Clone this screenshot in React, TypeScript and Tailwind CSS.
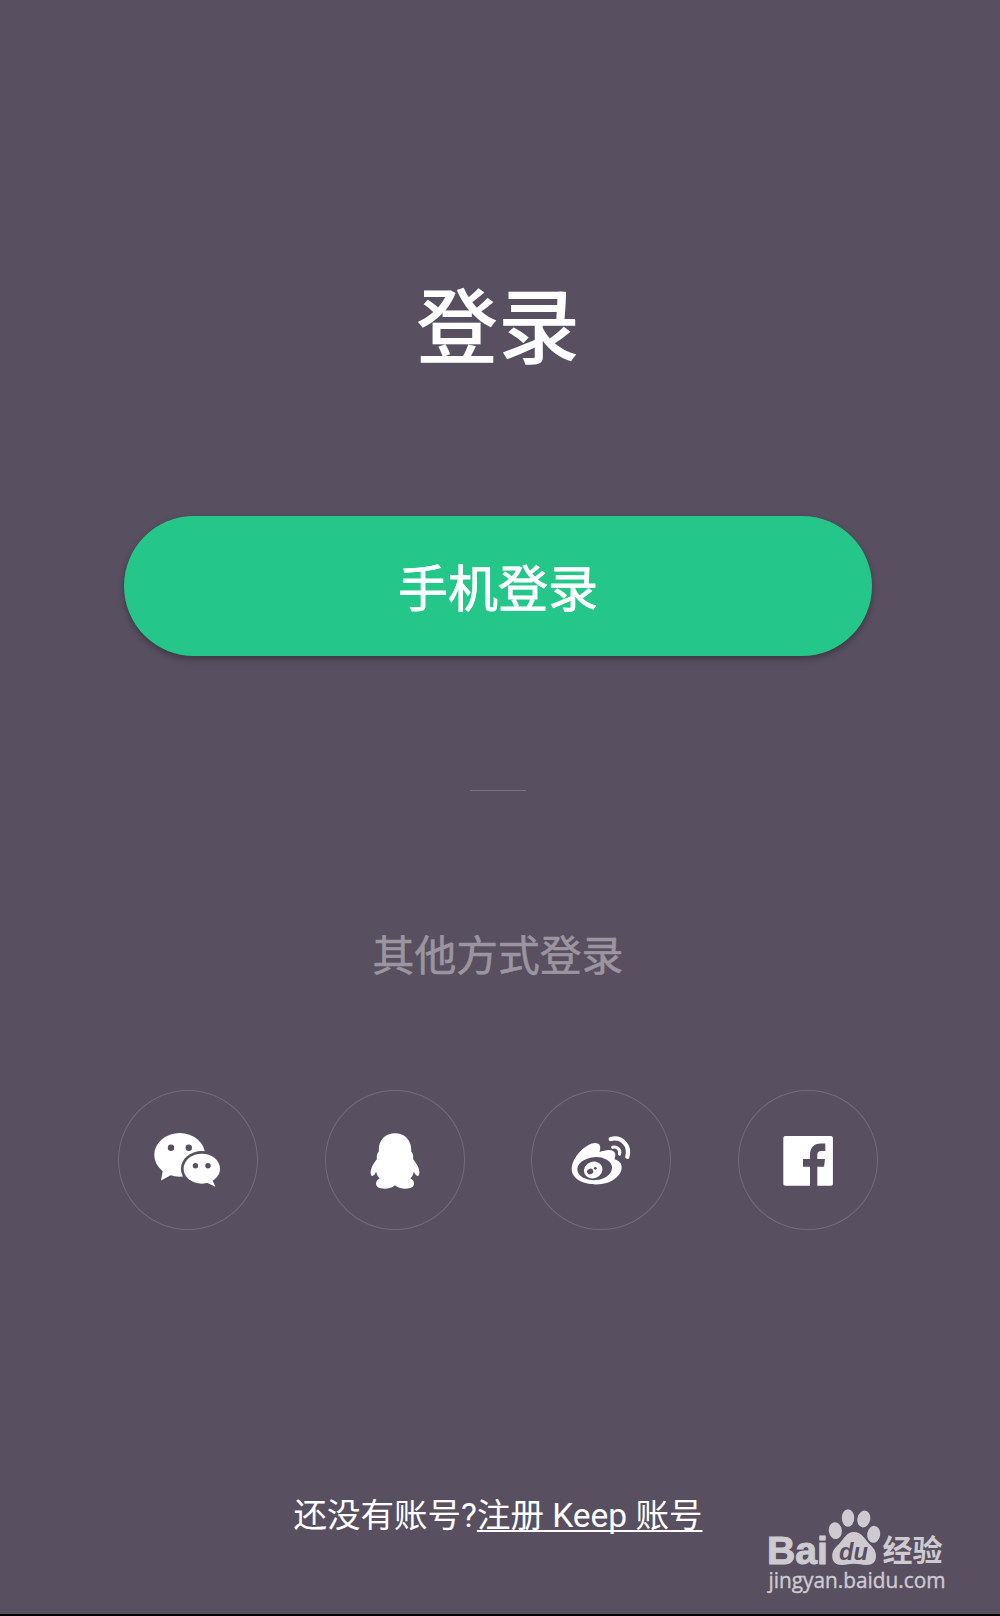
import type { ReactNode } from 'react';

const WechatIcon = () => (
  <svg viewBox="0 0 140 140" className="h-full w-full">
    <g className="fill-white">
      <ellipse cx="61.7" cy="64.9" rx="25.4" ry="21.8" />
      <path d="M45 79L43 90.4L54 84.5Z" />
    </g>
    <ellipse cx="83.8" cy="78.7" rx="20.9" ry="17.6" className="fill-[#584f60]" />
    <g className="fill-white">
      <ellipse cx="83.8" cy="78.7" rx="18.2" ry="15" />
      <path d="M88.5 92.5L97.4 96.8L94 89Z" />
    </g>
    <g className="fill-[#584f60]">
      <circle cx="53" cy="57.7" r="3.2" />
      <circle cx="70.8" cy="57.7" r="3.2" />
      <circle cx="77.4" cy="75.7" r="2.7" />
      <circle cx="90" cy="75.7" r="2.7" />
    </g>
  </svg>
);

const QQIcon = () => (
  <svg viewBox="0 0 140 140" className="h-full w-full fill-white">
    <path d="M70 43.3C60.5 43.3 53.8 50 53.8 59.5V61.5C52 63.5 51.5 66 51.9 69C48 74 45.6 78.5 45.6 82C45.6 84.6 46.2 86 47.3 86C48.7 86 50 84 51.2 81.8C51.8 84.5 52.8 86.8 54.6 88.6C52.2 89.6 51 91.4 51 93.6C51 97 54.5 98.8 59.5 98.8C64 98.8 67.5 97.6 70 95.3C72.5 97.6 76 98.8 80.5 98.8C85.5 98.8 89 97 89 93.6C89 91.4 87.8 89.6 85.4 88.6C87.2 86.8 88.2 84.5 88.8 81.8C90 84 91.3 86 92.7 86C93.8 86 94.4 84.6 94.4 82C94.4 78.5 92 74 88.1 69C88.5 66 88 63.5 86.2 61.5V59.5C86.2 50 79.5 43.3 70 43.3Z" />
  </svg>
);

const WeiboIcon = () => (
  <svg viewBox="-0.7 0 140 140" className="h-full w-full">
    <path
      className="fill-white"
      d="M40 79C40 72.5 43.5 66.5 49 61C54.5 55.5 62 51.6 66 53.6C68.9 55 69.2 58 67.8 62C73 60 80.5 58.2 83 62.6C84.2 64.8 83.6 66.8 82.8 69.2C87.2 70.5 90 73.2 90 77.2C90 85.5 79.5 94.4 64.5 94.4C51 94.4 40 88.5 40 79Z"
    />
    <ellipse cx="63" cy="78.6" rx="17.4" ry="11.5" transform="rotate(-5 63 78.6)" className="fill-[#584f60]" />
    <ellipse cx="61.5" cy="80" rx="9.4" ry="8.2" transform="rotate(-20 61.5 80)" className="fill-white" />
    <ellipse cx="58.5" cy="81.5" rx="3.2" ry="2.7" transform="rotate(-25 58.5 81.5)" className="fill-[#584f60]" />
    <circle cx="63.6" cy="78.3" r="1.4" className="fill-[#584f60]" />
    <g fill="none" strokeLinecap="round" className="stroke-white">
      <path d="M79 49C90 46.2 98.8 55.5 95.6 66.8" strokeWidth="4.3" />
      <path d="M81 57.2C85.5 56.2 89 59.6 87.8 64" strokeWidth="3.2" />
    </g>
  </svg>
);

const FacebookIcon = () => (
  <svg viewBox="0 0 140 140" className="h-full w-full">
    <rect x="45.3" y="46" width="49.6" height="49.7" rx="2" className="fill-white" />
    <path
      className="fill-[#584f60]"
      d="M72 96V76.7H65V69H72V65C72 57.5 76 53.4 82.5 53.4H87.3V61H83.5C80.5 61 79.3 62.2 79.3 65V69H87L86 76.7H79.3V96Z"
    />
  </svg>
);

const SocialButton = ({ label, children }: { label: string; children: ReactNode }) => (
  <button
    type="button"
    aria-label={label}
    className="h-[140px] w-[140px] rounded-full shadow-[inset_0_0_0_1px_#736b79]"
  >
    {children}
  </button>
);

// 百度经验 水印
const Watermark = () => (
  <svg viewBox="0 0 190 100" className="absolute left-[760px] top-[1500px] h-[100px] w-[190px] fill-[#cdcad0]">
    <text x="7" y="63.5" textLength="61" lengthAdjust="spacingAndGlyphs" className="stroke-[#cdcad0] font-['Liberation_Sans'] text-[39px] font-bold">
      Bai
    </text>
    <ellipse cx="75.3" cy="30.6" rx="6.5" ry="8.5" transform="rotate(-8 75.3 30.6)" />
    <ellipse cx="88" cy="18" rx="6.2" ry="8.8" />
    <ellipse cx="103.8" cy="19" rx="6.4" ry="8.5" transform="rotate(12 103.8 19)" />
    <ellipse cx="113.7" cy="34.3" rx="6.5" ry="8.5" transform="rotate(8 113.7 34.3)" />
    <path d="M94 32C102 32 104.5 39 109.5 44C114 48.5 116 51 116 56C116 62 112.5 65 106.5 65C101.5 65 98.5 63.8 94 63.8C89.5 63.8 87 65 82 65C76 65 72.2 62 72.2 56C72.2 51 74.5 48.5 79 44C84 39 86 32 94 32Z" />
    <text x="79" y="59.5" textLength="29" lengthAdjust="spacingAndGlyphs" className="fill-[#584f60] font-['Liberation_Sans'] text-[24px] font-bold italic">
      du
    </text>
    <text x="122.5" y="61" textLength="60" lengthAdjust="spacingAndGlyphs" className="font-['Noto_Sans_CJK_SC',sans-serif] text-[30px] font-bold">
      经验
    </text>
    <text x="8.5" y="87.5" textLength="177" lengthAdjust="spacingAndGlyphs" strokeWidth="0.4" className="stroke-[#cdcad0] font-['Open_Sans'] text-[21px] font-medium">
      jingyan.baidu.com
    </text>
  </svg>
);

const App: React.FC = () => {
  return (
    <div className="relative h-[1616px] w-[1000px] overflow-hidden border-b-2 border-black bg-[#584f60] font-[Roboto,'Noto_Sans_CJK_SC',sans-serif] text-white">
      <div className="flex w-[996px] flex-col items-center">
        {/* 标题 */}
        <h1 className="mt-[269px] text-[82px] font-medium leading-[120px]">登录</h1>

        {/* 手机登录 */}
        <button
          type="button"
          className="mt-[127px] h-[140px] w-[748px] rounded-full bg-[#24c789] pt-[9px] text-[50px] shadow-[0_3px_6px_rgba(0,0,0,0.3)] [-webkit-text-stroke:0.8px_white]"
        >
          手机登录
        </button>

        <div className="mt-[134px] h-px w-14 bg-[#7a7280]" />

        {/* 其他方式 */}
        <p className="mt-[134px] text-[41.8px] leading-[64px] text-[#9b959f] [-webkit-text-stroke:0.6px_#9b959f]">
          其他方式登录
        </p>

        <div className="mt-[101px] flex gap-[66.5px]">
          <SocialButton label="微信">
            <WechatIcon />
          </SocialButton>
          <SocialButton label="QQ">
            <QQIcon />
          </SocialButton>
          <SocialButton label="微博">
            <WeiboIcon />
          </SocialButton>
          <SocialButton label="Facebook">
            <FacebookIcon />
          </SocialButton>
        </div>

        {/* 注册 */}
        <p className="mt-[260.5px] whitespace-nowrap text-[33.5px] leading-[50px]">
          还没有账号?
          <a href="#" className="underline decoration-2 underline-offset-[3px] [text-decoration-skip-ink:none]">
            注册 Keep 账号
          </a>
        </p>
      </div>
      <Watermark />
    </div>
  );
};

export default App;
